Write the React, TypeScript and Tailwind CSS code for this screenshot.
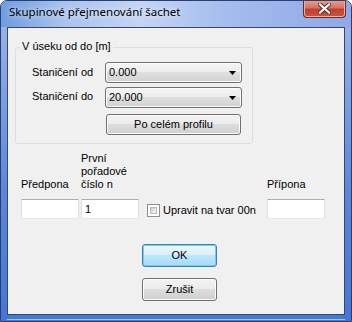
import React from "react";

const Combo = ({ value }: { value: string }) => (
  <div className="flex h-[21px] w-[137px] items-center rounded-[3px] border border-[#707070] bg-[linear-gradient(#f5f5f5_0%,#ececec_49%,#dfdfdf_50%,#d2d2d2_100%)] pl-[3px] pr-[5px] shadow-[inset_0_0_0_1px_#fbfbfb]">
    <span className="flex-1 leading-none">{value}</span>
    <svg width="7" height="4" viewBox="0 0 7 4">
      <path d="M0 0h7L3.5 4z" fill="#000" />
    </svg>
  </div>
);

const TextBox = ({ value = "" }: { value?: string }) => (
  <div className="flex h-[20px] w-[58px] items-center border border-[#dbdfe6] border-t-[#abadb3] border-b-[#e3e9ef] bg-white pl-[3px]">
    {value}
  </div>
);

export default function App() {
  return (
    <div className="flex h-[322px] w-[352px] flex-col overflow-hidden rounded-t-[7px] border border-[#2b3f6e] bg-[linear-gradient(180deg,#9fbaea_0%,#86a8e6_20%,#5887da_60%,#4676d5_100%)] font-['Liberation_Sans',Arial,sans-serif] text-[11px] text-black">
      {/* title bar */}
      <div className="flex h-[26px] shrink-0 items-start bg-[linear-gradient(90deg,#6f9be0_0%,#a9c3ee_18%,#c3d5f3_40%,#a4bcee_65%,#8fa9e8_100%)]">
        <span className="pl-[8px] pt-[3px] font-['Noto_Sans',sans-serif] text-[11.5px] leading-[16px] text-black [text-shadow:0_0_6px_#ffffff]">
          Skupinové přejmenování šachet
        </span>
        <div className="-mt-px ml-auto mr-[5px] flex h-[18px] w-[43px] items-center justify-center rounded-b-[4px] border border-t-0 border-[#6b2a22] bg-[linear-gradient(#e8a494_0%,#d47362_45%,#c2402f_55%,#c9553e_100%)] shadow-[inset_0_0_0_1px_#f0b0a0]">
          <svg width="13" height="11" viewBox="0 0 13 11">
            <path d="M2 1.5l9 8M11 1.5l-9 8" stroke="#5a2a25" strokeWidth="4" strokeLinecap="square" />
            <path d="M2 1.5l9 8M11 1.5l-9 8" stroke="#ffffff" strokeWidth="2.2" strokeLinecap="square" />
          </svg>
        </div>
      </div>

      {/* client area */}
      <div className="mx-[6px] flex h-[288px] w-[338px] shrink-0 flex-col border border-[#3a4568] bg-[#f0f0f0]">
        <div className="relative ml-[7px] mt-[19px] h-[97px] w-[238px] rounded-[3px] border border-[#d5dfe5] pl-[16px] pt-[14px]">
          <span className="absolute -top-[8px] left-[4px] bg-[#f0f0f0] px-[2px] leading-[13px]">V úseku od do [m]</span>
          <div className="flex items-center">
            <span className="w-[73px]">Staničení od</span>
            <Combo value="0.000" />
          </div>
          <div className="mt-[4px] flex items-start">
            <span className="w-[73px] pt-[1px]">Staničení do</span>
            <Combo value="20.000" />
          </div>
          <div className="ml-[74px] mt-[6px] flex h-[21px] w-[135px] items-center justify-center rounded-[3px] border border-[#707070] bg-[linear-gradient(#f2f2f2_0%,#ebebeb_49%,#dddddd_50%,#cfcfcf_100%)] shadow-[inset_0_0_0_1px_#fcfcfc]">
            Po celém profilu
          </div>
        </div>

        <div className="ml-[13px] mt-[8px] flex">
          <div className="flex w-[60px] flex-col">
            <div className="flex h-[39px] flex-col justify-end leading-[13px]">Předpona</div>
            <div className="mt-[8px]"><TextBox /></div>
          </div>
          <div className="flex w-[66px] flex-col">
            <div className="flex h-[39px] flex-col justify-end leading-[13px]">
              <span>První</span>
              <span>pořadové</span>
              <span>číslo n</span>
            </div>
            <div className="mt-[8px]"><TextBox value="1" /></div>
          </div>
          <div className="flex w-[120px] flex-col">
            <div className="h-[39px]" />
            <div className="mt-[8px] flex h-[20px] items-center gap-[3px] pt-[2px]">
              <div className="h-[13px] w-[13px] border border-[#8e8f8f] bg-white p-[2px]">
                <div className="h-full w-full border border-[#b8bcc2] bg-[linear-gradient(135deg,#c8ccd2_0%,#e6e8eb_60%,#f7f7f7_100%)]" />
              </div>
              <span>Upravit na tvar 00n</span>
            </div>
          </div>
          <div className="flex w-[60px] flex-col">
            <div className="flex h-[39px] flex-col justify-end leading-[13px]">Přípona</div>
            <div className="mt-[8px]"><TextBox /></div>
          </div>
        </div>

        <div className="ml-[134px] mt-[25px] flex h-[23px] w-[75px] items-center justify-center rounded-[3px] border border-[#3c7fb1] bg-[linear-gradient(#eaf6fd_0%,#d9f0fc_49%,#bee6fd_50%,#a7d9f5_100%)] shadow-[inset_0_0_0_1px_#6fd0f7]">
          OK
        </div>
        <div className="ml-[134px] mt-[11px] flex h-[23px] w-[75px] items-center justify-center rounded-[3px] border border-[#707070] bg-[linear-gradient(#f2f2f2_0%,#ebebeb_49%,#dddddd_50%,#cfcfcf_100%)] shadow-[inset_0_0_0_1px_#fcfcfc]">
          Zrušit
        </div>
      </div>
      <div className="mx-[6px] mt-auto mb-[1px] h-px bg-[#7fd4f8]" />
    </div>
  );
}
